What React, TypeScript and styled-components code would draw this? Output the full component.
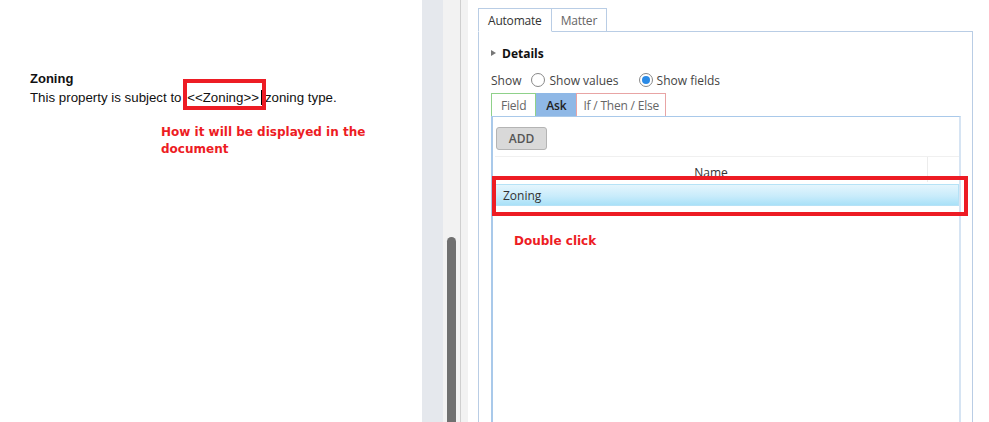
import styled, { createGlobalStyle } from 'styled-components';

const GlobalStyle = createGlobalStyle`
  html, body {
    margin: 0;
    padding: 0;
    background: #ffffff;
  }
  #root {
    height: 422px;
    overflow: hidden;
  }
`;

const Page = styled.div`
  display: flex;
  height: 422px;
  overflow: hidden;
`;

const DocPane = styled.div`
  width: 422px;
  flex-shrink: 0;
  padding: 69px 0 0 30px;
  box-sizing: border-box;
  font-family: 'Liberation Sans', Arial, sans-serif;
  color: #111;
`;

const DocHeading = styled.div`
  font-size: 13px;
  font-weight: bold;
  line-height: 19px;
`;

const DocLine = styled.div`
  font-size: 13.3px;
  line-height: 19px;
  white-space: nowrap;
`;

const MergeField = styled.span`
  position: relative;
  padding: 0 2px;

  &::after {
    content: '';
    position: absolute;
    left: -2px;
    right: -5px;
    top: -11px;
    bottom: -5px;
    border: 4px solid #ed1c24;
  }
`;

const Caret = styled.span`
  display: inline-block;
  width: 1px;
  height: 15px;
  background: #000;
  vertical-align: -3px;
  margin-right: 3px;
`;

const Annotation = styled.div<{ $indent: number; $top: number; $width?: number }>`
  margin: ${(p) => p.$top}px 0 0 ${(p) => p.$indent}px;
  width: ${(p) => (p.$width ? `${p.$width}px` : 'auto')};
  font-family: 'DejaVu Sans', 'Liberation Sans', sans-serif;
  font-weight: bold;
  font-size: 12px;
  line-height: 17px;
  color: #ed1c24;
`;

const Gutter = styled.div`
  width: 21px;
  flex-shrink: 0;
  background: #e5e8ed;
`;

const ScrollTrack = styled.div`
  width: 17px;
  flex-shrink: 0;
  background: #f2f2f2;
  display: flex;
  flex-direction: column;
  padding-top: 237px;
  padding-left: 4px;
  box-sizing: border-box;
`;

const ScrollThumb = styled.div`
  width: 9px;
  flex: 1;
  background: #707070;
  border-radius: 5px 5px 0 0;
`;

const Divider = styled.div`
  width: 1px;
  flex-shrink: 0;
  background: #cfcfcf;
`;

const Strip = styled.div`
  width: 7px;
  flex-shrink: 0;
  background: #f2f2f2;
`;

const RightPane = styled.div`
  flex: 1;
  padding: 8px 16px 0 10px;
  display: flex;
  flex-direction: column;
  font-family: 'Open Sans', 'Noto Sans', sans-serif;
  font-size: 12px;
  color: #333;
`;

const TabRow = styled.div`
  display: flex;
  height: 24px;
`;

const Tab = styled.div<{ $active?: boolean }>`
  padding: 0 9px;
  display: flex;
  align-items: center;
  border: 1px solid #b9cde5;
  border-bottom: ${(p) => (p.$active ? '1px solid #ffffff' : 'none')};
  margin-left: ${(p) => (p.$active ? '0' : '-1px')};
  color: ${(p) => (p.$active ? '#333' : '#666')};
  background: #fff;
  position: relative;
  z-index: ${(p) => (p.$active ? 1 : 0)};
  height: ${(p) => (p.$active ? '24px' : '23px')};
  box-sizing: border-box;
  letter-spacing: -0.2px;
`;

const Panel = styled.div`
  flex: 1;
  margin-top: -1px;
  border: 1px solid #b9cde5;
  border-bottom: none;
  padding: 11px 11px 0 12px;
  display: flex;
  flex-direction: column;
`;

const DetailsRow = styled.div`
  display: flex;
  align-items: center;
  gap: 6px;
  height: 20px;
  font-weight: bold;
  color: #111;
`;

const Triangle = styled.span`
  width: 0;
  height: 0;
  border-top: 3px solid transparent;
  border-bottom: 3px solid transparent;
  border-left: 5px solid #777;
`;

const ShowRow = styled.div`
  display: flex;
  align-items: center;
  height: 20px;
  margin-top: 7px;
  color: #444;
`;

const RadioLabel = styled.label`
  display: flex;
  align-items: center;
  gap: 4px;
  margin-left: 10px;
  margin-right: 10px;
`;

const RadioCircle = styled.span<{ $checked?: boolean }>`
  width: 14px;
  height: 14px;
  border-radius: 50%;
  border: 1px solid #888;
  box-sizing: border-box;
  display: flex;
  align-items: center;
  justify-content: center;
  background: #fff;

  &::after {
    content: '';
    width: 8px;
    height: 8px;
    border-radius: 50%;
    background: ${(p) => (p.$checked ? '#2a8ae6' : 'transparent')};
  }
`;

const SubTabRow = styled.div`
  display: flex;
  height: 23px;
  margin-top: 3px;
`;

const SubTab = styled.div<{ $tone: 'green' | 'blue' | 'pink' }>`
  display: flex;
  align-items: center;
  padding: 0 ${(p) => (p.$tone === 'pink' ? '6px' : '9px')};
  box-sizing: border-box;
  border: 1px solid
    ${(p) => (p.$tone === 'green' ? '#8fd18a' : p.$tone === 'pink' ? '#e8a4a4' : '#8fb8e6')};
  border-bottom: none;
  background: ${(p) => (p.$tone === 'blue' ? '#8fb8e6' : '#fff')};
  color: ${(p) => (p.$tone === 'blue' ? '#222' : '#666')};
  font-weight: ${(p) => (p.$tone === 'blue' ? 600 : 400)};
  letter-spacing: -0.2px;
`;

const InnerBox = styled.div`
  flex: 1;
  border-top: 1px solid #a9c9ea;
  border-left: 2px solid #a9c9ea;
  border-right: 2px solid #d6e4f3;
  padding: 10px 0 0 2px;
  display: flex;
  flex-direction: column;
`;

const AddButton = styled.button`
  width: 51px;
  height: 23px;
  margin-left: 1px;
  background: #d9d9d9;
  border: 1px solid #b4b4b4;
  border-radius: 3px;
  font-family: 'Open Sans', 'Noto Sans', sans-serif;
  font-weight: 600;
  font-size: 12px;
  color: #555;
  padding: 0;
`;

const GridHeader = styled.div`
  display: flex;
  height: 25px;
  margin-top: 6px;
  border-top: 1px solid #f0f0f0;
`;

const HeaderCell = styled.div`
  flex: 1;
  display: flex;
  align-items: flex-end;
  justify-content: center;
  padding-bottom: 1px;
  border-right: 1px solid #ececec;
  color: #333;
`;

const HeaderFiller = styled.div`
  width: 31px;
`;

const GridRow = styled.div`
  position: relative;
  height: 20px;
  margin-top: 2px;
  display: flex;
  align-items: center;
  padding-left: 7px;
  color: #333;
  background: linear-gradient(#e4f5fd 0%, #c9ecfb 55%, #a9e1f8 100%);
  border: 1px solid #b6e2f6;

  &::after {
    content: '';
    position: absolute;
    left: -4px;
    right: -10px;
    top: -9px;
    bottom: -11px;
    border: 4px solid #ed1c24;
  }
`;

export default function App() {
  return (
    <Page>
      <GlobalStyle />
      <DocPane>
        <DocHeading>Zoning</DocHeading>
        <DocLine>
          This property is subject to <MergeField>&lt;&lt;Zoning&gt;&gt;</MergeField>
          <Caret />
          zoning type.
        </DocLine>
        <Annotation $indent={131} $top={17} $width={210}>
          How it will be displayed in the document
        </Annotation>
      </DocPane>
      <Gutter />
      <ScrollTrack>
        <ScrollThumb />
      </ScrollTrack>
      <Divider />
      <Strip />
      <RightPane>
        <TabRow>
          <Tab $active>Automate</Tab>
          <Tab>Matter</Tab>
        </TabRow>
        <Panel>
          <DetailsRow>
            <Triangle />
            Details
          </DetailsRow>
          <ShowRow>
            Show
            <RadioLabel>
              <RadioCircle />
              Show values
            </RadioLabel>
            <RadioLabel>
              <RadioCircle $checked />
              Show fields
            </RadioLabel>
          </ShowRow>
          <SubTabRow>
            <SubTab $tone="green">Field</SubTab>
            <SubTab $tone="blue">Ask</SubTab>
            <SubTab $tone="pink">If / Then / Else</SubTab>
          </SubTabRow>
          <InnerBox>
            <div>
              <AddButton>ADD</AddButton>
            </div>
            <GridHeader>
              <HeaderCell>Name</HeaderCell>
              <HeaderFiller />
            </GridHeader>
            <GridRow>Zoning</GridRow>
            <Annotation $indent={19} $top={27}>
              Double click
            </Annotation>
          </InnerBox>
        </Panel>
      </RightPane>
    </Page>
  );
}
